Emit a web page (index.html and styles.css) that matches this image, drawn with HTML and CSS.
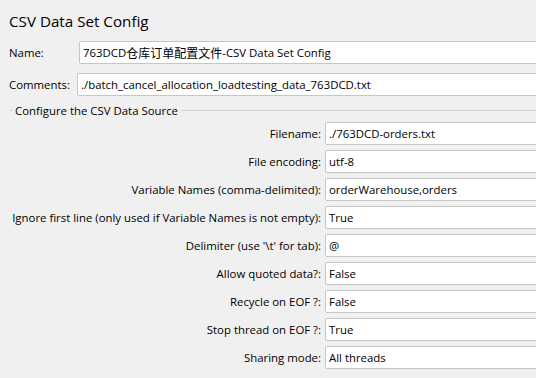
FILE: index.html
```html
<!DOCTYPE html>
<html>
<head>
<meta charset="utf-8">
<link rel="stylesheet" href="styles.css">
</head>
<body>
<div class="page">
  <div class="title">CSV Data Set Config</div>
  <div class="top-row name-row">
    <div class="lbl lbl-name">Name:</div>
    <div class="box"><span>763DCD</span><span class="cjk">仓库订单配置文件</span><span>-CSV Data Set Config</span></div>
  </div>
  <div class="top-row comments-row">
    <div class="lbl lbl-comments">Comments:</div>
    <div class="box">./batch_cancel_allocation_loadtesting_data_763DCD.txt</div>
  </div>
  <div class="section-head">
    <div class="seg"></div>
    <div class="legend">Configure the CSV Data Source</div>
    <div class="line"></div>
  </div>
  <div class="grid">
    <div class="glbl">Filename:</div><div class="box">./763DCD-orders.txt</div>
    <div class="glbl">File encoding:</div><div class="box">utf-8</div>
    <div class="glbl">Variable Names (comma-delimited):</div><div class="box">orderWarehouse,orders</div>
    <div class="glbl">Ignore first line (only used if Variable Names is not empty):</div><div class="box">True</div>
    <div class="glbl">Delimiter (use '\t' for tab):</div><div class="box">@</div>
    <div class="glbl">Allow quoted data?:</div><div class="box">False</div>
    <div class="glbl">Recycle on EOF ?:</div><div class="box">False</div>
    <div class="glbl">Stop thread on EOF ?:</div><div class="box">True</div>
    <div class="glbl">Sharing mode:</div><div class="box">All threads</div>
  </div>
</div>
</body>
</html>
```
FILE: styles.css
```css
html, body {
  margin: 0;
  padding: 0;
}
body {
  background: #f0f0f0;
  color: #000;
  font-family: "Open Sans", "Noto Sans CJK SC", sans-serif;
  font-size: 11.4px;
  width: 536px;
  height: 378px;
  overflow: hidden;
}
.page {
  width: 560px;
}
.title {
  padding: 11px 0 0 9px;
  font-size: 15.2px;
  line-height: 20px;
  height: 20px;
}
.top-row {
  display: flex;
  align-items: center;
  padding-left: 9px;
}
.name-row {
  margin-top: 10px;
}
.comments-row {
  margin-top: 9px;
}
.lbl-name {
  width: 70px;
}
.lbl-comments {
  width: 68px;
}
.box {
  flex: 1;
  height: 23px;
  box-sizing: border-box;
  border: 1px solid #c6c6c6;
  border-radius: 2px;
  background: #fff;
  padding: 0 3px;
  display: flex;
  align-items: center;
  white-space: nowrap;
  overflow: hidden;
}
.cjk {
  font-family: "Noto Sans CJK SC", sans-serif;
  font-size: 12px;
}
.section-head {
  display: flex;
  align-items: center;
  height: 15px;
  margin-top: 7px;
  padding-left: 10px;
}
.seg {
  width: 3px;
  height: 1px;
  background: #d2d2d2;
}
.legend {
  margin: 0 3px 0 2px;
  line-height: 15px;
  white-space: nowrap;
}
.line {
  flex: 1;
  height: 1px;
  background: #d2d2d2;
}
.grid {
  display: grid;
  grid-template-columns: 321px 1fr;
  grid-auto-rows: 23px;
  column-gap: 4px;
  row-gap: 5px;
  margin-top: 4px;
}
.glbl {
  display: flex;
  align-items: center;
  justify-content: flex-end;
  white-space: nowrap;
}
```
